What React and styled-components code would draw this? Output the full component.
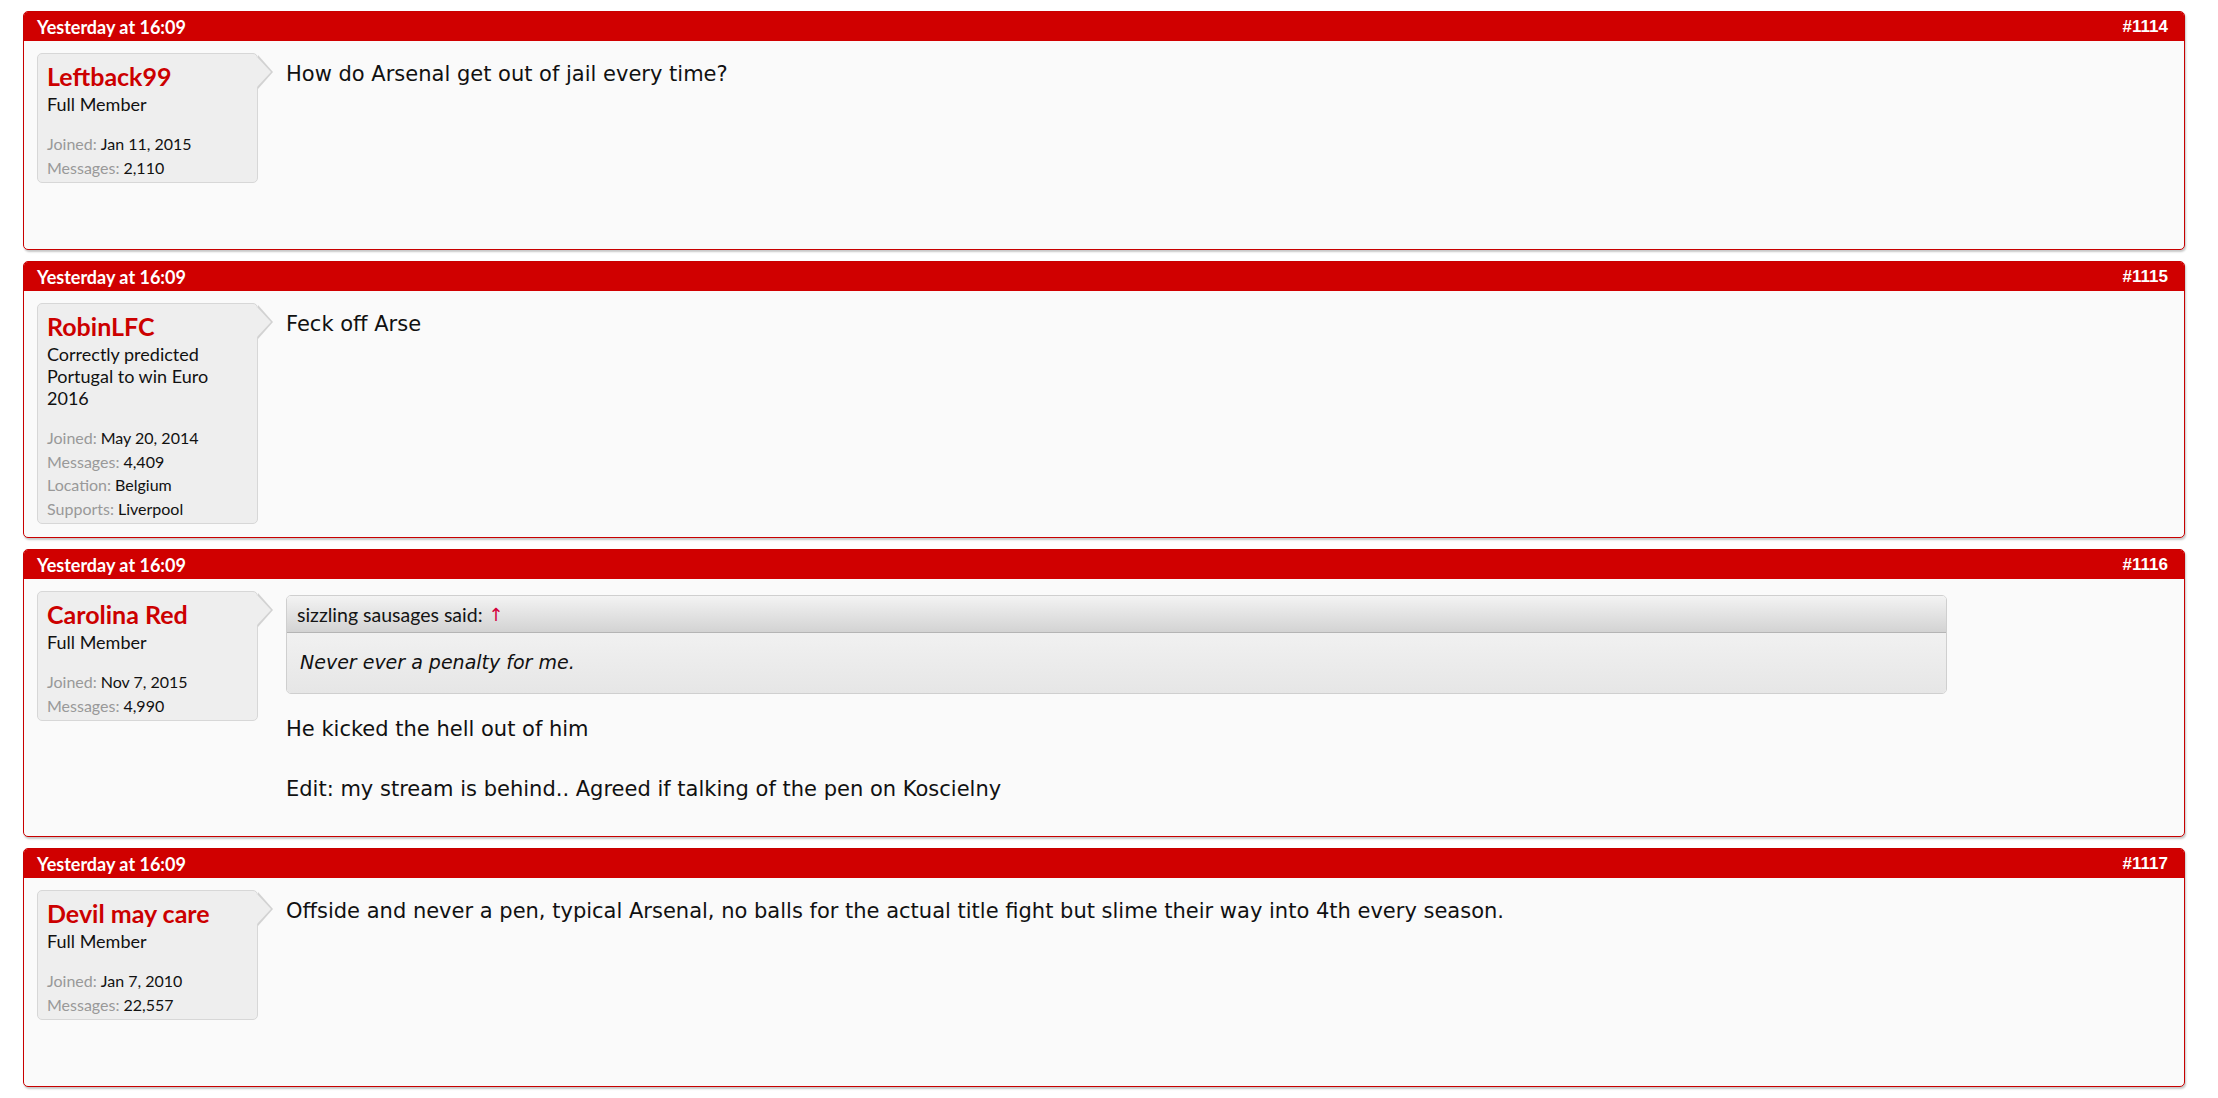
import React from 'react';
import styled, { createGlobalStyle } from 'styled-components';

const GlobalStyle = createGlobalStyle`
  html, body {
    margin: 0;
    padding: 0;
    background: #ffffff;
  }
`

const Page = styled.div`
  padding: 11px 33px 0 23px;
  font-family: Lato, 'DejaVu Sans Condensed', sans-serif;
`

const Post = styled.div`
  border: 1px solid #c80000;
  border-radius: 5px;
  background-color: #fafafa;
  box-shadow: 1px 2px 2px rgba(0, 0, 0, 0.22);
  margin-bottom: 11px;
  overflow: hidden;
`

const PostHeader = styled.div`
  height: 29px;
  background-color: #d00000;
  color: #ffffff;
  display: flex;
  align-items: center;
  justify-content: space-between;
  padding: 0 16px 0 13px;
`

const PostDate = styled.span`
  font-family: Lato, sans-serif;
  font-weight: 700;
  font-size: 18px;
`

const PostNumber = styled.span`
  font-family: 'Liberation Sans', Arial, sans-serif;
  font-weight: 700;
  font-size: 17px;
`

const PostBody = styled.div`
  display: flex;
  align-items: flex-start;
  padding: 12px 14px 13px 13px;
`

const UserInfo = styled.div`
  position: relative;
  flex: 0 0 auto;
  width: 221px;
  box-sizing: border-box;
  background-color: #eeeeee;
  border: 1px solid #d7d7d7;
  border-radius: 5px;
  padding: 7px 9px 3px 9px;

  &::before {
    content: '';
    position: absolute;
    top: 1px;
    right: -16px;
    border-left: 15px solid #d2d2d2;
    border-top: 17px solid transparent;
    border-bottom: 17px solid transparent;
  }

  &::after {
    content: '';
    position: absolute;
    top: 3px;
    right: -14px;
    border-left: 14px solid #eeeeee;
    border-top: 15px solid transparent;
    border-bottom: 15px solid transparent;
  }
`

const UserName = styled.div`
  font-family: Lato, sans-serif;
  font-weight: 700;
  font-size: 25px;
  line-height: 31px;
  color: #cc0000;
`

const UserTitle = styled.div`
  font-family: Lato, sans-serif;
  font-size: 18px;
  line-height: 22px;
  color: #111111;
  margin-top: 1px;
`

const ExtraInfo = styled.dl`
  margin: 17px 0 0;
  font-family: Lato, sans-serif;
  font-size: 16px;
  line-height: 23.5px;
`

const InfoRow = styled.div`
  display: flex;
  gap: 4px;

  dt {
    color: #999999;
  }

  dd {
    margin: 0;
    color: #111111;
  }
`

const Message = styled.div`
  flex: 1;
  min-height: 183px;
  box-sizing: border-box;
  margin-left: 28px;
  padding: 4px 0 19px;
  font-family: 'DejaVu Sans', Verdana, sans-serif;
  font-size: 21px;
  color: #111111;
`

const MessageText = styled.div`
  line-height: 30px;
  margin-top: ${({ $afterQuote }) => ($afterQuote ? '0' : '2px')};
`

const Quote = styled.div`
  max-width: 1659px;
  border: 1px solid #cfcfcf;
  border-radius: 5px;
  overflow: hidden;
  margin-bottom: 20px;
`

const QuoteHeader = styled.div`
  height: 37px;
  box-sizing: border-box;
  display: flex;
  align-items: center;
  gap: 6px;
  padding: 0 10px;
  background: linear-gradient(#f3f3f3, #d3d3d3);
  border-bottom: 1px solid #b5b5b5;
  font-family: Lato, sans-serif;
  font-size: 19.5px;
  color: #141414;
`

const QuoteArrow = styled.span`
  font-family: 'DejaVu Sans', sans-serif;
  color: #d4003a;
  font-size: 18px;
`

const QuoteText = styled.div`
  height: 60px;
  box-sizing: border-box;
  padding: 15px 13px 0;
  background: linear-gradient(#f1f1f1, #e6e6e6);
  font-style: italic;
  font-size: 19px;
  line-height: 28px;
`

const posts = [
  {
    id: 1114,
    user: 'Leftback99',
    title: 'Full Member',
    info: [['Joined', 'Jan 11, 2015'], ['Messages', '2,110']],
    lines: ['How do Arsenal get out of jail every time?'],
  },
  {
    id: 1115,
    user: 'RobinLFC',
    title: 'Correctly predicted Portugal to win Euro 2016',
    info: [
      ['Joined', 'May 20, 2014'],
      ['Messages', '4,409'],
      ['Location', 'Belgium'],
      ['Supports', 'Liverpool'],
    ],
    lines: ['Feck off Arse'],
  },
  {
    id: 1116,
    user: 'Carolina Red',
    title: 'Full Member',
    info: [['Joined', 'Nov 7, 2015'], ['Messages', '4,990']],
    quote: { author: 'sizzling sausages', text: 'Never ever a penalty for me.' },
    lines: ['He kicked the hell out of him', '', 'Edit: my stream is behind.. Agreed if talking of the pen on Koscielny'],
  },
  {
    id: 1117,
    user: 'Devil may care',
    title: 'Full Member',
    info: [['Joined', 'Jan 7, 2010'], ['Messages', '22,557']],
    lines: ['Offside and never a pen, typical Arsenal, no balls for the actual title fight but slime their way into 4th every season.'],
  },
]

function PostItem ({ post }) {
  return (
    <Post>
      <PostHeader>
        <PostDate>Yesterday at 16:09</PostDate>
        <PostNumber>#{post.id}</PostNumber>
      </PostHeader>
      <PostBody>
        <UserInfo>
          <UserName>{post.user}</UserName>
          <UserTitle>{post.title}</UserTitle>
          <ExtraInfo>
            {post.info.map(([label, value]) => (
              <InfoRow key={label}>
                <dt>{label}:</dt>
                <dd>{value}</dd>
              </InfoRow>
            ))}
          </ExtraInfo>
        </UserInfo>
        <Message>
          {post.quote ? (
            <Quote>
              <QuoteHeader>
                {post.quote.author} said: <QuoteArrow>↑</QuoteArrow>
              </QuoteHeader>
              <QuoteText>{post.quote.text}</QuoteText>
            </Quote>
          ) : null}
          <MessageText $afterQuote={!!post.quote}>
            {post.lines.map((line, index) =>
              // eslint-disable-next-line react/no-array-index-key
              <div key={index}>{line || '\u00a0'}</div>)}
          </MessageText>
        </Message>
      </PostBody>
    </Post>
  )
}

export default function App () {
  return (
    <Page>
      <GlobalStyle />
      {posts.map((post) => <PostItem key={post.id} post={post} />)}
    </Page>
  )
}
